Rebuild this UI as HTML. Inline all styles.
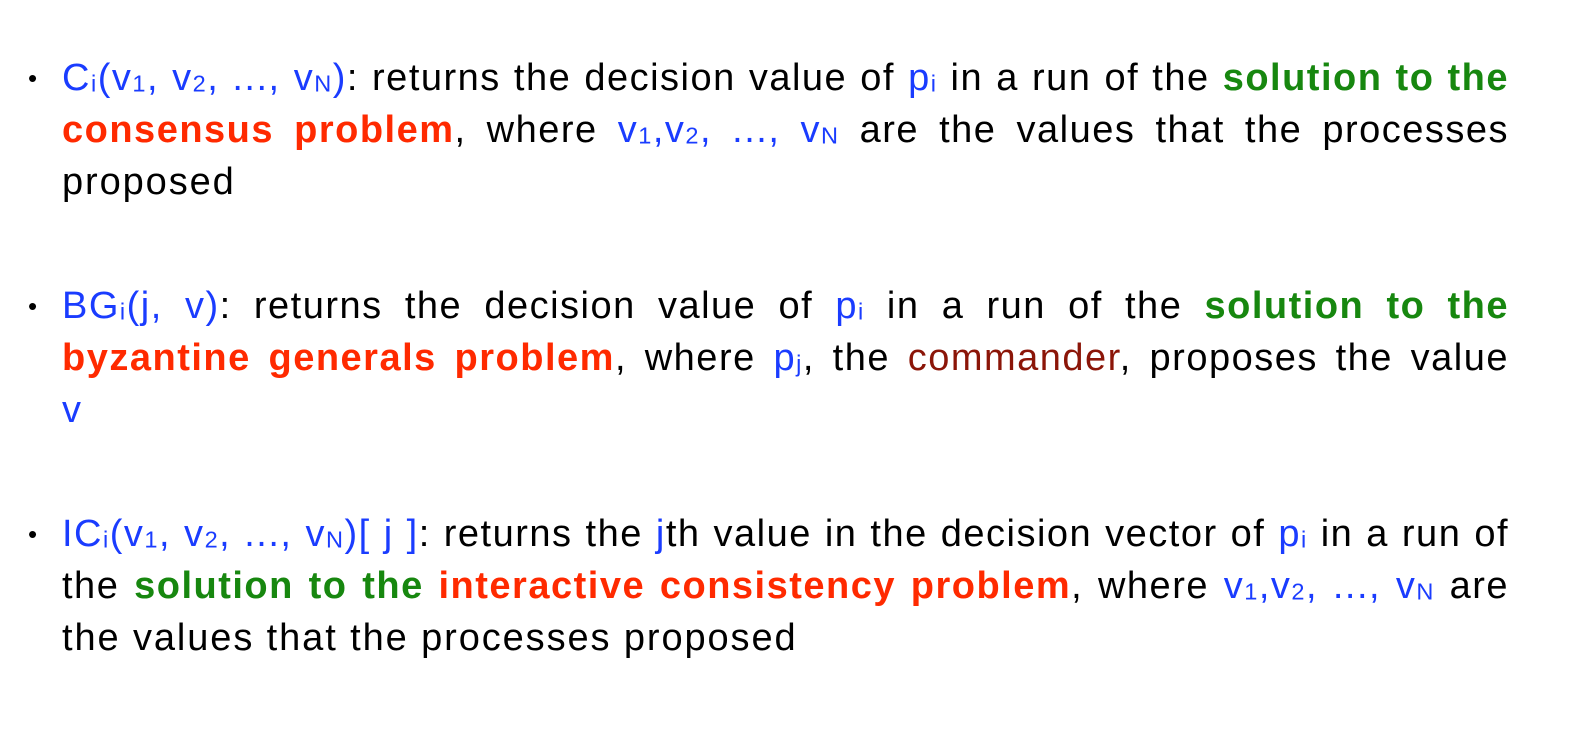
<!DOCTYPE html>
<html><head><meta charset="utf-8"><style>
html,body{margin:0;padding:0;background:#fff;width:1584px;height:733px;overflow:hidden}
body{font-family:"Liberation Sans",Arial,sans-serif;font-size:38px;letter-spacing:1.5px;color:#000}
.item{position:absolute;left:62px;width:1447px;line-height:52px}
.item:before{content:"•";position:absolute;left:-34px;top:0;font-size:26px}
.l{text-align:justify;text-align-last:justify;white-space:nowrap}
.l.e{text-align-last:left;letter-spacing:1.9px}
.b{color:#1a3cff}.g{color:#17870f;font-weight:bold}.r{color:#ff2a00;font-weight:bold}.d{color:#8b1508}
sub{font-size:0.62em;vertical-align:-0.06em;line-height:0}
</style></head><body>
<div class="item" style="top:52px">
<div class="l"><span class="b">C<sub>i</sub>(v<sub>1</sub>, v<sub>2</sub>, ..., v<sub>N</sub>)</span>: returns the decision value of <span class="b">p<sub>i</sub></span> in a run of the <span class="g">solution to the</span></div>
<div class="l"><span class="r">consensus problem</span>, where <span class="b">v<sub>1</sub>,v<sub>2</sub>, ..., v<sub>N</sub></span> are the values that the processes</div>
<div class="l e">proposed</div>
</div>
<div class="item" style="top:280px">
<div class="l"><span class="b">BG<sub>i</sub>(j, v)</span>: returns the decision value of <span class="b">p<sub>i</sub></span> in a run of the <span class="g">solution to the</span></div>
<div class="l"><span class="r">byzantine generals problem</span>, where <span class="b">p<sub>j</sub></span>, the <span class="d">commander</span>, proposes the value</div>
<div class="l e"><span class="b">v</span></div>
</div>
<div class="item" style="top:508px">
<div class="l"><span class="b">IC<sub>i</sub>(v<sub>1</sub>, v<sub>2</sub>, ..., v<sub>N</sub>)[ j ]</span>: returns the <span class="b">j</span>th value in the decision vector of <span class="b">p<sub>i</sub></span> in a run of</div>
<div class="l">the <span class="g">solution to the</span> <span class="r">interactive consistency problem</span>, where <span class="b">v<sub>1</sub>,v<sub>2</sub>, ..., v<sub>N</sub></span> are</div>
<div class="l e">the values that the processes proposed</div>
</div>
</body></html>
